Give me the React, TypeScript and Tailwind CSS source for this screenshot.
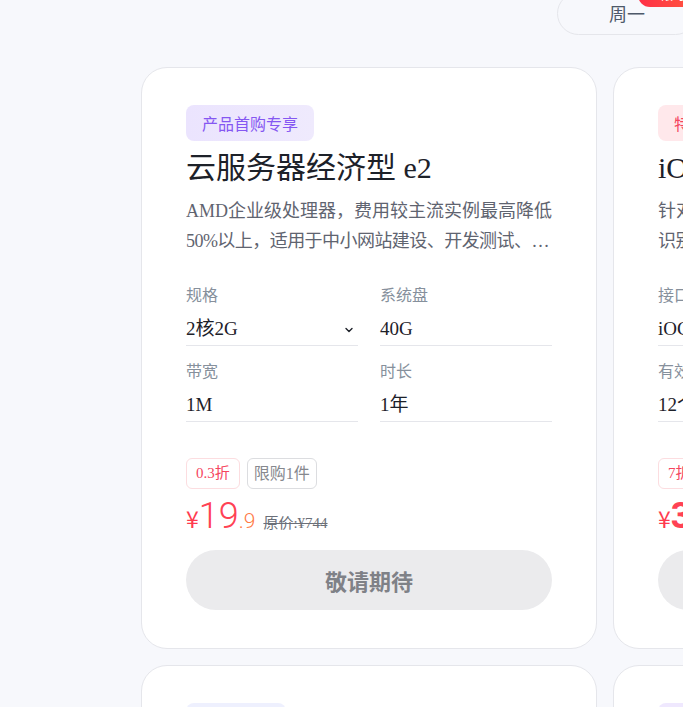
import React from "react";

const serif = "font-['Liberation_Serif','Noto_Sans_CJK_SC',serif]";

function Chevron() {
  return (
    <svg width="12" height="12" viewBox="0 0 12 12" fill="none" className="text-[#1d2129]">
      <path d="M3 4.5 L6 7.5 L9 4.5" stroke="currentColor" strokeWidth="1.4" strokeLinecap="round" strokeLinejoin="round" />
    </svg>
  );
}

type Spec = { label: string; value: string; select?: boolean };

function Card(props: {
  tag: string;
  tagCls: string;
  title: string;
  desc1: string;
  desc2: string;
  specs: Spec[];
  discount: string;
  limit?: string;
  priceInt: string;
  priceDec: string;
  orig: string;
  bold?: boolean;
}) {
  return (
    <div className={`w-[456px] shrink-0 rounded-[26px] border border-[#e5e6eb] bg-white px-[44px] pt-[37px] pb-[38px] ${serif}`}>
      <div className={`inline-flex h-[36px] items-center rounded-[8px] px-[16px] text-[16px] ${props.tagCls}`}>
        {props.tag}
      </div>
      <div className="mt-[7px] whitespace-nowrap text-[30px] leading-[40px] text-[#1d2129]">{props.title}</div>
      <div className="mt-[8px] text-[18px] leading-[30px] text-[#5f6470]">
        <div className="overflow-hidden whitespace-nowrap">{props.desc1}</div>
        <div className="overflow-hidden whitespace-nowrap tracking-[-0.55px]">{props.desc2}</div>
      </div>
      <div className="mt-[29px] grid grid-cols-2 gap-x-[22px]">
        {props.specs.map((s, i) => (
          <div key={i} className={i >= 2 ? "mt-[15px]" : ""}>
            <div className="whitespace-nowrap text-[16px] leading-[22px] text-[#86909c]">{s.label}</div>
            <div className="mt-[9px] flex h-[30px] items-center justify-between border-b border-[#e5e6eb] pb-[2px] text-[19px] text-[#1d2129]">
              <span className="whitespace-nowrap">{s.value}</span>
              {s.select && <span className="mr-[3px]"><Chevron /></span>}
            </div>
          </div>
        ))}
      </div>
      <div className="mt-[36px] flex gap-[7px]">
        <div className="flex h-[31px] items-center whitespace-nowrap rounded-[6px] border border-[#fcdde0] px-[9px] text-[15px] text-[#f5455e]">
          {props.discount}
        </div>
        {props.limit && (
          <div className="flex h-[31px] items-center whitespace-nowrap rounded-[6px] border border-[#dcdde0] px-[6px] text-[16px] text-[#86888e]">
            {props.limit}
          </div>
        )}
      </div>
      <div className="mt-[9px] flex h-[36px] items-baseline leading-[36px]">
        <span className="font-['Noto_Sans_CJK_SC',sans-serif] text-[23px] text-[#ff3b4f]">¥</span>
        <span
          className={`font-['Roboto',sans-serif] text-[36px] text-[#ff4254] ${props.bold ? "font-bold" : "font-light"}`}
        >
          {props.priceInt}
        </span>
        <span className="font-['Roboto',sans-serif] text-[21px] font-light text-[#ff7a45]">{props.priceDec}</span>
        <span className="ml-[8px] whitespace-nowrap text-[15px] text-[#6b6f78] line-through">{props.orig}</span>
      </div>
      <div className="mt-[16px] flex h-[60px] items-center justify-center rounded-full bg-[#ebebed] font-['Noto_Sans_CJK_SC',sans-serif] text-[22px] font-bold text-[#7f8187]">
        敬请期待
      </div>
    </div>
  );
}

export default function App() {
  return (
    <div className="relative min-h-[707px] w-full overflow-hidden bg-[#f7f8fc]">
      <div className="ml-[557px] -mt-[8px] flex">
        <div className="relative flex h-[43px] w-[140px] shrink-0 items-center justify-center rounded-full border border-[#e5e6eb] font-['Noto_Sans_CJK_SC',sans-serif] text-[18px] text-[#4e5969]">
          <span>周一</span>
          <div className="absolute left-[80px] -top-[11px] flex h-[25px] w-[70px] items-center justify-center rounded-[12px] bg-gradient-to-r from-[#ff2d46] to-[#ff5a3c] text-[12px] text-white">
            限时
          </div>
        </div>
      </div>
      <div className="ml-[141px] mt-[32px] flex gap-[16px]">
        <Card
          tag="产品首购专享"
          tagCls="bg-gradient-to-r from-[#ebe4fe] to-[#efeafd] text-[#8557f2] font-['Noto_Sans_CJK_SC',sans-serif]"
          title="云服务器经济型 e2"
          desc1="AMD企业级处理器，费用较主流实例最高降低"
          desc2="50%以上，适用于中小网站建设、开发测试、…"
          specs={[
            { label: "规格", value: "2核2G", select: true },
            { label: "系统盘", value: "40G" },
            { label: "带宽", value: "1M" },
            { label: "时长", value: "1年" },
          ]}
          discount="0.3折"
          limit="限购1件"
          priceInt="19"
          priceDec=".9"
          orig="原价:¥744"
        />
        <Card
          tag="特惠专享"
          tagCls="bg-[#ffe8eb] text-[#f5455e] font-['Noto_Sans_CJK_SC',sans-serif]"
          title="iOCR 通用版"
          desc1="针对多种场景的文字识别，支持自定义"
          desc2="识别模板，识别准确率高…"
          specs={[
            { label: "接口", value: "iOCR通用版" },
            { label: "调用量", value: "1万次" },
            { label: "有效期", value: "12个月" },
            { label: "并发", value: "2QPS" },
          ]}
          discount="7折"
          priceInt="3"
          priceDec=".5"
          orig="原价:¥5"
          bold
        />
      </div>
      <div className="ml-[141px] mt-[16px] flex gap-[16px]">
        <div className="h-[200px] w-[456px] shrink-0 rounded-[26px] border border-[#e5e6eb] bg-white px-[44px] pt-[37px]">
          <div className="h-[36px] w-[100px] rounded-[8px] bg-[#eef0fe]" />
        </div>
        <div className="h-[200px] w-[456px] shrink-0 rounded-[26px] border border-[#e5e6eb] bg-white px-[44px] pt-[37px]">
          <div className="h-[36px] w-[100px] rounded-[8px] bg-[#efe8fe]" />
        </div>
      </div>
    </div>
  );
}
